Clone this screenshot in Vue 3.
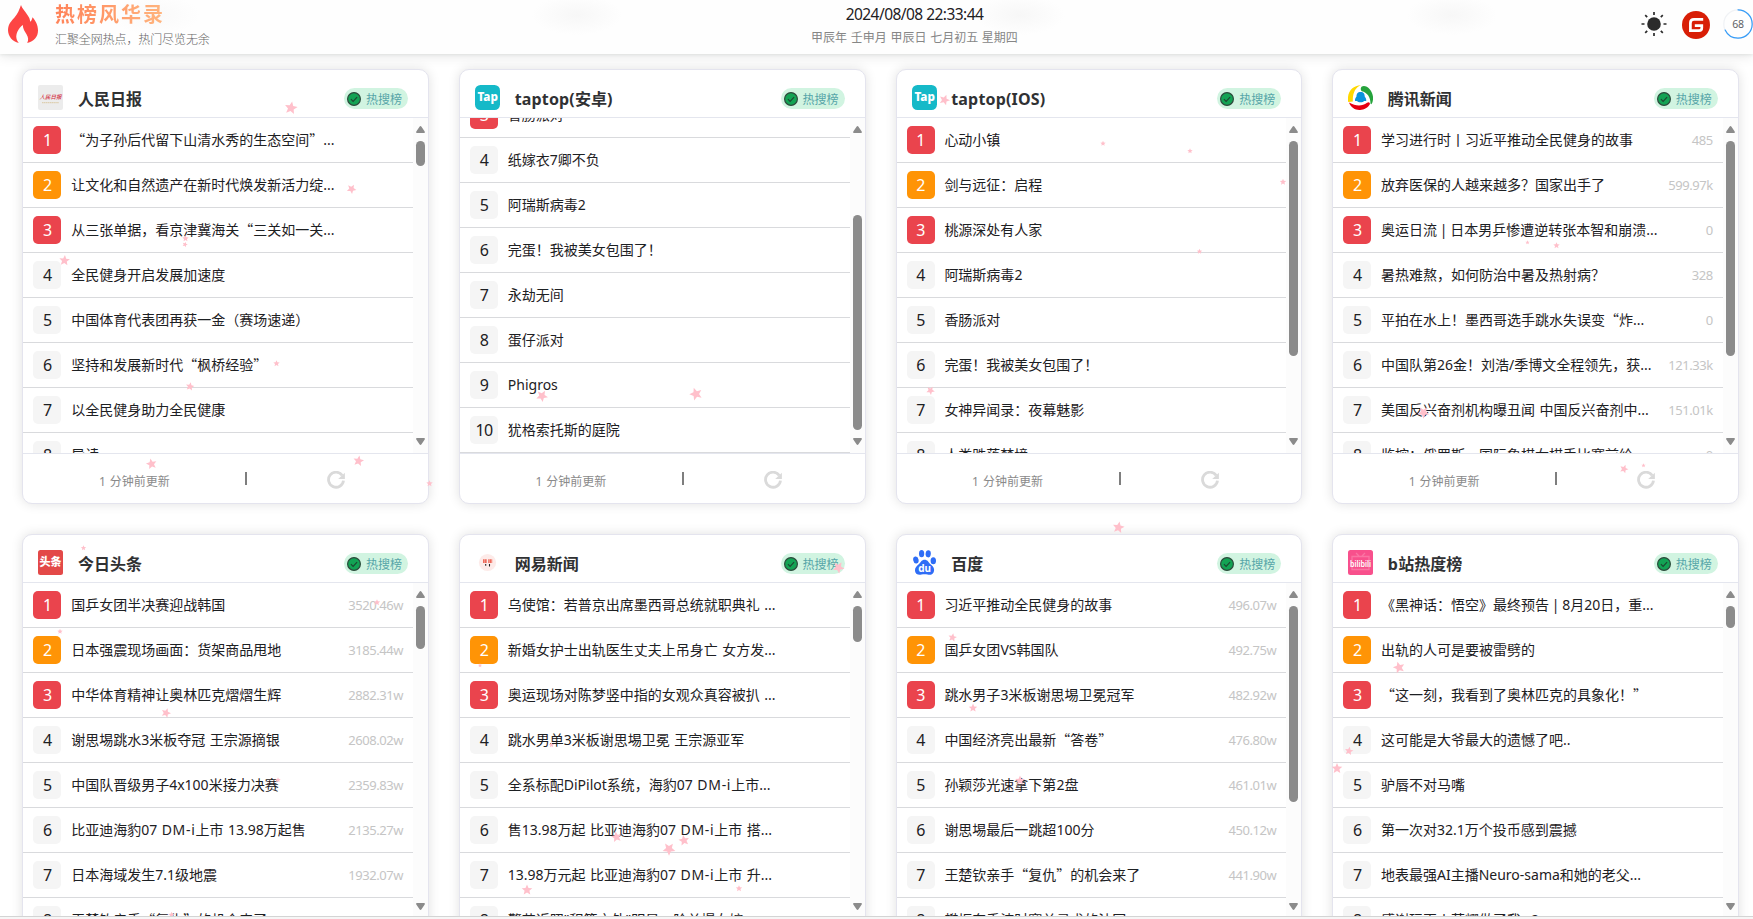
<script setup>
const runs = (text) =>
  (text.match(/ \| |DM-i|(?:(?! \| |DM-i)[\x20-\x7e])+|[^\x20-\x7e]+/g) || []).map((t) => ({
    t,
    kind: t === ' | ' ? 'latin pipe' : t === 'DM-i' ? 'latin wide' : t.charCodeAt(0) < 0x7f ? 'latin' : '',
  }))

const list = (items, first = 1) =>
  items.map((item, i) => {
    const [title, value] = Array.isArray(item) ? item : [item]
    return { rank: first + i, title: runs(title), value }
  })

const cards = [
  {
    id: 'people', name: '人民日报', shift: 0, thumb: [23, 25],
    rows: list([
      '“为子孙后代留下山清水秀的生态空间”...',
      '让文化和自然遗产在新时代焕发新活力绽...',
      '从三张单据，看京津冀海关“三关如一关...',
      '全民健身开启发展加速度',
      '中国体育代表团再获一金（赛场速递）',
      '坚持和发展新时代“枫桥经验”',
      '以全民健身助力全民健康',
      '导读',
    ]),
  },
  {
    id: 'tap', name: 'taptop(安卓)', shift: -25, thumb: [97, 215],
    rows: list([
      '香肠派对', '纸嫁衣7卿不负', '阿瑞斯病毒2', '完蛋！我被美女包围了！',
      '永劫无间', '蛋仔派对', 'Phigros', '犹格索托斯的庭院',
    ], 3),
  },
  {
    id: 'tap', name: 'taptop(IOS)', shift: 0, thumb: [23, 215],
    rows: list([
      '心动小镇', '剑与远征：启程', '桃源深处有人家', '阿瑞斯病毒2',
      '香肠派对', '完蛋！我被美女包围了！', '女神异闻录：夜幕魅影', '人类跌落梦境',
    ]),
  },
  {
    id: 'tencent', name: '腾讯新闻', shift: 0, thumb: [23, 215],
    rows: list([
      ['学习进行时丨习近平推动全民健身的故事', '485'],
      ['放弃医保的人越来越多？国家出手了', '599.97k'],
      ['奥运日流 | 日本男乒惨遭逆转张本智和崩溃...', '0'],
      ['暑热难熬，如何防治中暑及热射病？', '328'],
      ['平拍在水上！墨西哥选手跳水失误变“炸...', '0'],
      ['中国队第26金！刘浩/季博文全程领先，获...', '121.33k'],
      ['美国反兴奋剂机构曝丑闻 中国反兴奋剂中...', '151.01k'],
      ['监控：俄罗斯一国际象棋女棋手比赛前给...', '0'],
    ]),
  },
  {
    id: 'toutiao', name: '今日头条', shift: 0, thumb: [23, 43],
    rows: list([
      ['国乒女团半决赛迎战韩国', '3520.46w'],
      ['日本强震现场画面：货架商品甩地', '3185.44w'],
      ['中华体育精神让奥林匹克熠熠生辉', '2882.31w'],
      ['谢思埸跳水3米板夺冠 王宗源摘银', '2608.02w'],
      ['中国队晋级男子4x100米接力决赛', '2359.83w'],
      ['比亚迪海豹07 DM-i上市 13.98万起售', '2135.27w'],
      ['日本海域发生7.1级地震', '1932.07w'],
      ['王楚钦亲手“复仇”的机会来了'],
    ]),
  },
  {
    id: 'netease', name: '网易新闻', shift: 0, thumb: [23, 36],
    rows: list([
      '乌使馆：若普京出席墨西哥总统就职典礼 ...',
      '新婚女护士出轨医生丈夫上吊身亡 女方发...',
      '奥运现场对陈梦竖中指的女观众真容被扒 ...',
      '跳水男单3米板谢思埸卫冕 王宗源亚军',
      '全系标配DiPilot系统，海豹07 DM-i上市...',
      '售13.98万起 比亚迪海豹07 DM-i上市 搭...',
      '13.98万元起 比亚迪海豹07 DM-i上市 升...',
      '警花近照"积等之外"明显，险单爆女嫁...',
    ]),
  },
  {
    id: 'baidu', name: '百度', shift: 0, thumb: [23, 196],
    rows: list([
      ['习近平推动全民健身的故事', '496.07w'],
      ['国乒女团VS韩国队', '492.75w'],
      ['跳水男子3米板谢思埸卫冕冠军', '482.92w'],
      ['中国经济亮出最新“答卷”', '476.80w'],
      ['孙颖莎光速拿下第2盘', '461.01w'],
      ['谢思埸最后一跳超100分', '450.12w'],
      ['王楚钦亲手“复仇”的机会来了', '441.90w'],
      ['樊振东手波时赛单寻求的法国'],
    ]),
  },
  {
    id: 'bili', name: 'b站热度榜', shift: 0, thumb: [23, 22],
    rows: list([
      '《黑神话：悟空》最终预告 | 8月20日，重...',
      '出轨的人可是要被雷劈的',
      '“这一刻，我看到了奥林匹克的具象化！”',
      '这可能是大爷最大的遗憾了吧..',
      '驴唇不对马嘴',
      '第一次对32.1万个投币感到震撼',
      '地表最强AI主播Neuro-sama和她的老父...',
      '感谢玩再火萝耀做了我...?',
    ]),
  },
]

const stars = [
  [291, 108, 12, 10], [351.5, 189, 9, 30], [185.5, 238.5, 6, 0], [185, 244.5, 5, 20], [64.5, 260.5, 10, 5],
  [276.5, 363.5, 6, 0], [190, 386.5, 8, 10], [151.5, 464, 10, -12], [358.5, 461, 10, 10], [429.5, 483.5, 6, 0],
  [83.5, 548, 5, 0], [542, 396, 11, 30], [696, 394, 12, -20], [838.5, 567.5, 11, 30], [944.5, 100, 10, 20],
  [1103, 143.5, 5, 0], [1190, 151, 5, 0], [1283, 182, 6, 0], [1199.5, 251.5, 5, 0], [930.5, 390.5, 8, 30],
  [1118.5, 527.5, 11, 10], [1527.5, 242.5, 4, 0], [1556.5, 245.5, 6, 0], [1423.5, 412.5, 11, 36], [1624, 469, 8, 20],
  [1643.5, 465.5, 4, 0], [377, 602.5, 6, 0], [60, 631.5, 5, 0], [166, 713, 9, 20], [278, 780, 5, 0],
  [171.5, 915, 6, 0], [480, 665.5, 4, 0], [551.5, 745, 5, 0], [616.5, 837, 10, -10], [669, 849, 12, 36],
  [684, 840.5, 10, -10], [527, 890, 10, 0], [739, 888.5, 6, 0], [952.5, 637.5, 8, 10], [973, 708, 8, 0],
  [1020, 780.5, 9, 0], [1399, 667.5, 11, -15], [1349, 751, 8, 10], [1337, 768.5, 10, 0],
]
</script>

<template>
  <div class="page" lang="zh-CN">
    <header class="topbar">
      <div class="brand">
        <svg class="flame" viewBox="0 0 30 38">
          <path d="M13 0C14 3.500 18 7 21 12.500C21.800 14 22 15.500 22.200 16.800C23.500 15.600 24.200 14 24.500 12.200C27.500 15.500 30 20 30 25.500C30 32 26 36.200 19.200 38C20.800 35 20.300 32 18.500 29.200C16.600 26.300 15 24 14.800 20C10.500 23 7.500 29 8.500 33.500C9 35.500 9.800 36.800 10.800 38C4.500 36.500 0 31.500 0 25C0 19 3.500 16 6.500 12.500C9.500 9 11.500 4.500 13 0Z" fill="#fd4544" />
        </svg>
        <div>
          <div class="brand-name">热榜风华录</div>
          <div class="brand-sub">汇聚全网热点，热门尽览无余</div>
        </div>
      </div>
      <div class="clock">
        <div class="time">2024/08/08 22:33:44</div>
        <div class="lunar">甲辰年 壬申月 甲辰日 七月初五 星期四</div>
      </div>
      <div class="tools">
        <svg class="sun" viewBox="0 0 26 26">
          <circle cx="13" cy="13" r="6.800" fill="#2b2b2b" />
          <g stroke="#2b2b2b" stroke-width="1.700">
            <path d="M13 1v3M13 22v3M.5 13h3M22.500 13h3M4.200 4.200l2 2M19.800 19.800l2 2M4.200 21.800l2-2M19.800 6.200l2-2" />
          </g>
        </svg>
        <svg class="gitee" viewBox="0 0 28 28">
          <circle cx="14" cy="14" r="14" fill="#d81e06" />
          <path d="M21.200 8.400H12Q8.400 8.400 8.400 12V19.600H17Q19.800 19.600 19.800 17V14.600H12.800" fill="none" stroke="#fff" stroke-width="2.700" />
        </svg>
        <div class="progress">
          <svg viewBox="0 0 30 30">
            <circle cx="15" cy="15" r="14.200" fill="none" stroke="#f0f2f5" stroke-width="1.200" />
            <circle cx="15" cy="15" r="14.200" fill="none" stroke="#359cf8" stroke-width="1.200" pathLength="100" stroke-dasharray="68 100" stroke-linecap="round" transform="rotate(-90 15 15)" />
          </svg>
          <span>68</span>
        </div>
      </div>
    </header>

    <main class="grid">
      <section v-for="card in cards" :key="card.name" class="card">
        <div class="head">
          <svg class="logo" viewBox="0 0 25 25">
            <template v-if="card.id === 'people'">
              <rect width="25" height="25" rx="2" fill="#ececec" />
              <text x="12.500" y="14" class="cjk" font-size="5.500" font-style="italic" font-weight="500" text-anchor="middle" fill="#d2293a">人民日报</text>
              <path d="M4 17.700H21" stroke="#d8c49a" stroke-width=".9" stroke-dasharray="1.500 .4" />
            </template>
            <template v-else-if="card.id === 'tap'">
              <rect width="25" height="25" rx="5.500" fill="#15b9c8" />
              <text x="12.700" y="16" class="lat" font-size="12" font-weight="800" text-anchor="middle" fill="#fff" textLength="20.500" lengthAdjust="spacingAndGlyphs">Tap</text>
            </template>
            <template v-else-if="card.id === 'tencent'">
              <circle cx="12.500" cy="12.500" r="10" fill="#fff" />
              <path d="M.2 17C-1.500 8 4 .3 13 .3C8 2 4.500 7 4.800 16.500Z" fill="#ffd800" />
              <path d="M12.800 3.500C13.500-.5 19 .8 21.500 4C25 8 26 13 24.200 18C23.700 19.300 22.800 19.500 22.500 18.500C22.500 12 19 7.500 13.800 6.300Q12.500 5.200 12.800 3.500Z" fill="#25a33c" />
              <path d="M1 17.500C8 21.500 14 21.500 19 17.800Q21.800 16.500 22 19C18 27 4.500 27.500 1 17.500Z" fill="#e60012" />
              <path d="M12.600 7C9.500 7 8.500 9 8.500 11.500C7.200 13 6.800 14.500 7.100 16H9C10 17.700 15 17.700 16.200 16H18.200C18.500 14.500 18 13 16.700 11.500C16.700 9 15.700 7 12.600 7Z" fill="#0a94dc" />
            </template>
            <template v-else-if="card.id === 'toutiao'">
              <rect width="25" height="25" rx="2.500" fill="#e34948" />
              <text x="12.500" y="16" class="cjk" font-size="11" font-weight="900" text-anchor="middle" fill="#fff">头条</text>
            </template>
            <template v-else-if="card.id === 'netease'">
              <circle cx="12.500" cy="12.500" r="8.600" fill="#fdebe9" />
              <path d="M8 11.200h4M13.200 11.200h4" stroke="#ee6a5b" stroke-width="3.800" stroke-dasharray="1.500 .3" />
              <path d="M10.700 14v1.800M14.500 14v2.600" stroke="#222" stroke-width="1.100" />
            </template>
            <template v-else-if="card.id === 'baidu'">
              <g fill="#2f6df6">
                <ellipse cx="3.900" cy="10" rx="2.700" ry="3.500" transform="rotate(-12 3.900 10)" />
                <ellipse cx="9.600" cy="3.700" rx="2.600" ry="3.600" />
                <ellipse cx="16.200" cy="3.800" rx="2.600" ry="3.600" transform="rotate(8 16.200 3.800)" />
                <ellipse cx="21.300" cy="10.800" rx="2.700" ry="3.500" />
                <path d="M12.600 9.800C15.500 9.800 16.300 12 18.200 14C20.500 16 22.600 17.500 22 21C21.500 24.800 18 25.200 15.500 24.600C13.500 24.200 11.500 24.200 9.500 24.600C6.500 25.200 3.500 24.500 3 21C2.600 17.500 5 16 7 14C9 12 9.700 9.800 12.600 9.800Z" />
              </g>
              <text x="12.600" y="22.300" class="lat" font-size="10" font-weight="700" text-anchor="middle" fill="#fff">du</text>
            </template>
            <template v-else>
              <rect width="25" height="25" rx="2.500" fill="#f8508c" />
              <path d="M8 3l3 3M17 3l-3 3M4 6.500h17v13H4z" fill="none" stroke="#fa74a3" stroke-width="1.300" />
              <text transform="translate(12.500 17) scale(1 1.350)" class="lat" font-size="7.200" font-weight="600" text-anchor="middle" fill="#fff">bilibili</text>
            </template>
          </svg>
          <h2><span v-for="(r, k) in runs(card.name)" :key="k" :class="r.kind">{{ r.t }}</span></h2>
          <div class="tag">
            <svg viewBox="0 0 14 14">
              <circle cx="7" cy="7" r="6.400" fill="#13a354" stroke="#2d4a3c" stroke-width="1.200" />
              <path d="M3.900 7.200l2.200 2.200 4-4.300" fill="none" stroke="#1d4631" stroke-width="1.100" />
            </svg>
            热搜榜
          </div>
        </div>

        <div class="body">
          <ul :style="{ marginTop: card.shift + 'px' }">
            <li v-for="row in card.rows" :key="row.rank">
              <b :class="['rank', 'rank-' + row.rank]">{{ row.rank }}</b>
              <span class="title"><span v-for="(r, k) in row.title" :key="k" :class="r.kind">{{ r.t }}</span></span>
              <span v-if="row.value" class="value">{{ row.value }}</span>
            </li>
          </ul>
          <div class="bar">
            <svg class="arrow" viewBox="0 0 9 7"><path d="M4.500 0Q5 0 5.500.8L8.700 5.500Q9.200 7 8.200 7H.8Q-.2 7 .3 5.500L3.500.8Q4 0 4.500 0Z" fill="#8b8b8b" /></svg>
            <i class="thumb" :style="{ marginTop: card.thumb[0] - 15 + 'px', height: card.thumb[1] + 'px' }"></i>
            <svg class="arrow down" viewBox="0 0 9 7"><path d="M4.500 7Q5 7 5.500 6.200L8.700 1.500Q9.200 0 8.200 0H.8Q-.2 0 .3 1.500L3.500 6.200Q4 7 4.500 7Z" fill="#8b8b8b" /></svg>
          </div>
        </div>

        <div class="foot">
          <span class="updated"><span class="latin">1 </span>分钟前更新</span>
          <i class="divider"></i>
          <svg class="refresh" viewBox="0 0 18 18">
            <path d="M15.200 4.400A7.500 7.500 0 1 0 16.500 9.600" fill="none" stroke="#dadada" stroke-width="2.800" />
            <path d="M17.900 1.800V8H11.200Z" fill="#dadada" />
          </svg>
        </div>
      </section>
    </main>

    <svg class="stars" viewBox="0 0 1753 919">
      <path v-for="(s, i) in stars" :key="i" d="M0-.55L.15-.2L.53-.17L.24.08L.33.45L0 .25L-.33.45L-.24.08L-.53-.17L-.15-.2Z" fill="#ffc0cb" :transform="`translate(${s[0]} ${s[1]}) rotate(${s[3]}) scale(${s[2]})`" />
    </svg>
    <div class="edge"></div>
  </div>
</template>

<style>
body {
  background: #fff;
  overflow: hidden;
}
</style>

<style scoped>
.page {
  position: relative;
  height: 919px;
  overflow: hidden;
  background: #fff;
  color: #1d2023;
  font-family: "Noto Sans CJK SC", sans-serif;
}
.latin,
.time,
.value,
.rank {
  font-family: "Noto Sans", "Open Sans", sans-serif;
}
.time,
.value,
.rank {
  letter-spacing: -0.035em;
}
.latin {
  word-spacing: 0.8px;
}
.pipe {
  margin: 0 -1.700px;
}
.wide {
  letter-spacing: 0.700px;
}
.lat {
  font-family: "Noto Sans", sans-serif;
}
.cjk {
  font-family: "Noto Sans CJK SC", sans-serif;
}
.topbar {
  position: relative;
  display: grid;
  grid-template-columns: 1fr auto 1fr;
  height: 54px;
  background:
    radial-gradient(ellipse 45px 20px at 155px 15px, #f9f9f9, transparent),
    radial-gradient(ellipse 45px 20px at 577px 15px, #f7f7f7, transparent),
    radial-gradient(ellipse 45px 20px at 1020px 15px, #f7f7f7, transparent),
    radial-gradient(ellipse 45px 20px at 1452px 15px, #f7f7f7, transparent),
    #fefefe;
  box-shadow: 0 2px 12px rgba(0, 0, 0, 0.1), 0 1px 3px rgba(20, 50, 40, 0.08);
}
.brand {
  display: flex;
  gap: 17px;
  padding-left: 8px;
}
.flame {
  width: 30px;
  height: 38px;
  margin-top: 5px;
}
.brand-name {
  width: max-content;
  height: 28px;
  line-height: 28px;
  font-size: 20px;
  font-weight: 700;
  letter-spacing: 2px;
  color: transparent;
  background: linear-gradient(90deg, #ff8359, #ffb57e);
  background-clip: text;
}
.brand-sub {
  font-size: 12px;
  line-height: 22px;
  font-weight: 300;
  letter-spacing: -0.1px;
  color: #666;
}
.clock {
  margin-left: 76px;
  text-align: center;
}
.time {
  height: 28px;
  line-height: 28px;
  font-size: 15.500px;
}
.lunar {
  font-size: 12px;
  line-height: 17px;
  word-spacing: 1px;
  color: #868686;
}
.tools {
  display: flex;
  justify-content: flex-end;
}
.sun {
  width: 26px;
  height: 26px;
  margin: 11px 15px 0 0;
}
.gitee {
  width: 28px;
  height: 28px;
  margin: 11px 13px 0 0;
}
.progress {
  display: grid;
  width: 30px;
  height: 30px;
  margin-top: 9px;
}
.progress > * {
  grid-area: 1 / 1;
}
.progress span {
  text-align: center;
  line-height: 30px;
  font-size: 10.500px;
  letter-spacing: -0.2px;
  font-family: "Noto Sans", sans-serif;
  color: #606266;
}
.grid {
  display: grid;
  grid-template-columns: repeat(4, 406.600px);
  grid-auto-rows: 435px;
  gap: 30px;
  padding: 15px 0 0 22.400px;
}
.card {
  box-sizing: border-box;
  display: flex;
  flex-direction: column;
  overflow: hidden;
  border: 1px solid #e4e4ee;
  border-radius: 10px;
  background: #fff;
  box-shadow: 0 0 12px rgba(0, 0, 0, 0.12);
}
.head {
  box-sizing: border-box;
  display: flex;
  flex: none;
  height: 48px;
  padding: 15px 20px 0 15px;
  border-bottom: 1px solid #e4e6ee;
}
.logo {
  width: 25px;
  height: 25px;
}
h2 {
  flex: 1;
  margin: 1px 0 0 14.700px;
  height: 24px;
  line-height: 24px;
  font-size: 16px;
  font-weight: 600;
  color: #303133;
}
h2 .latin {
  font-weight: 700;
  letter-spacing: 0.01em;
}
.tag {
  display: flex;
  align-items: center;
  gap: 5px;
  box-sizing: border-box;
  width: 64px;
  height: 21px;
  margin-top: 3px;
  padding-left: 3px;
  border-radius: 11px;
  background: #d1f4e1;
  color: #56a5a8;
  font-size: 12px;
  line-height: 21px;
  white-space: nowrap;
}
.tag svg {
  flex: none;
  width: 14px;
  height: 14px;
}
.body {
  display: flex;
  height: 335px;
  overflow: hidden;
}
ul {
  flex: 1;
  min-width: 0;
  margin: 0;
  padding: 0;
  list-style: none;
}
li {
  box-sizing: border-box;
  display: flex;
  align-items: center;
  height: 45px;
  padding: 0 10px;
  border-bottom: 1px solid #d9dadd;
}
.rank {
  flex: none;
  width: 28px;
  height: 28px;
  border-radius: 5px;
  background: #f5f5f5;
  text-align: center;
  line-height: 28px;
  font-size: 16px;
  font-weight: 400;
}
.rank-1,
.rank-3 {
  background: #ea444d;
  color: #fff;
}
.rank-2 {
  background: #ff9406;
  color: #fff;
}
.title {
  flex: 1;
  margin: 0 0 2px 9.800px;
  font-size: 14px;
  line-height: 28px;
  white-space: pre;
}
.value {
  font-size: 13px;
  line-height: 28px;
  color: #c5c5c5;
}
.bar {
  display: flex;
  flex-direction: column;
  align-items: center;
  box-sizing: border-box;
  width: 15px;
  padding: 8px 0;
  background: #fcfcfc;
}
.arrow {
  flex: none;
  width: 9px;
  height: 7px;
}
.down {
  margin-top: auto;
}
.thumb {
  flex: none;
  width: 9px;
  border-radius: 4.500px;
  background: #8b8b8b;
}
.foot {
  display: flex;
  flex: 1;
  border-top: 1px solid #e4e6ee;
}
.updated {
  width: 146.500px;
  margin: 17px 0 0 75.500px;
  font-size: 12px;
  line-height: 20px;
  color: #8a8a8a;
  white-space: pre;
}
.divider {
  width: 2px;
  height: 13px;
  margin-top: 18px;
  background: #7e7e7e;
}
.refresh {
  width: 18px;
  height: 18px;
  margin: 17px 0 0 80px;
}
.stars {
  position: absolute;
  inset: 0;
  width: 1753px;
  height: 919px;
}
.edge {
  position: absolute;
  left: 0;
  right: 0;
  bottom: 0;
  height: 2px;
  border-top: 1px solid #d4d4d4;
  background: #f6f6f6;
}
</style>
